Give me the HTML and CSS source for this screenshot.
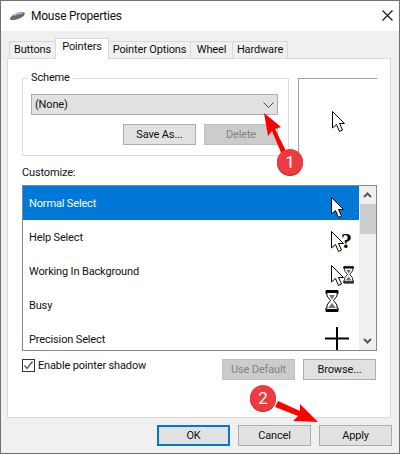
FILE: index.html
```html
<!DOCTYPE html>
<html lang="en">
<head>
  <meta charset="UTF-8">
  <title>Mouse Properties</title>
  <link rel="stylesheet" href="styles.css">
</head>
<body>
  <svg width="0" height="0" class="defs">
    <defs>
      <path id="arrow" d="M0.5 0.5V17L4.5 13.5L7.5 20.5L10.5 19L7.5 12.5H12.5Z" stroke-width="1" stroke-linejoin="miter"/>
      <g id="glass">
        <path d="M1 0.5H13V3.5H12V6L8.5 10.5L12 15V18H13V21.5H1V18H2V15L5.5 10.5L2 6V3.5H1Z" fill="#fff" stroke="#000"/>
        <path d="M1 1H13V3H1ZM1 19H13V21H1Z" fill="#000"/>
        <path d="M4 5H10L7 9.5ZM7 13L11 18H3Z" fill="#777"/>
      </g>
    </defs>
  </svg>

  <div class="window">
    <div class="titlebar">
      <svg class="app-icon" width="15" height="8" viewBox="0 0 15 8">
        <path d="M0 6C2 3 8 0 12 0C15 0 15.500 2 14 3.500C12 6 6 8 2 8C0 8 -0.500 7 0 6Z" fill="#5f6b75"/>
        <path d="M4 3.500C6 2 9 1 12.500 1.300" stroke="#b4bdc4" stroke-width="1.500" fill="none"/>
      </svg>
      <span class="title">Mouse Properties</span>
      <svg class="close" width="11" height="11" viewBox="0 0 11 11">
        <path d="M0.5 0.5L10.5 10.5M10.5 0.5L0.5 10.5" stroke="#111" stroke-width="1.1"/>
      </svg>
    </div>

    <div class="body">
      <div class="tabs">
        <div class="tab tab-buttons">Buttons</div>
        <div class="tab tab-pointers active">Pointers</div>
        <div class="tab tab-options">Pointer Options</div>
        <div class="tab tab-wheel">Wheel</div>
        <div class="tab tab-hardware">Hardware</div>
      </div>

      <div class="panel">
        <div class="top-row">
          <fieldset class="scheme">
            <legend>Scheme</legend>
            <div class="select">
              <span>(None)</span>
              <svg width="11" height="6" viewBox="0 0 11 6"><path d="M0.5 0.5L5.5 5.500L10.500 0.5" stroke="#444" fill="none"/></svg>
            </div>
            <div class="scheme-buttons">
              <button class="btn">Save As...</button>
              <button class="btn btn-wide disabled">Delete</button>
            </div>
          </fieldset>
          <div class="preview">
            <svg width="16" height="22" viewBox="0 0 16 22"><use href="#arrow" fill="#fff" stroke="#000"/></svg>
          </div>
        </div>

        <div class="label">Customize:</div>
        <div class="list">
          <div class="rows">
            <div class="row selected">
              <span>Normal Select</span>
              <svg class="cursor" width="34" height="34" viewBox="0 0 34 34"><use href="#arrow" x="8" y="11" fill="#fff" stroke="#000"/></svg>
            </div>
            <div class="row">
              <span>Help Select</span>
              <svg class="cursor" width="34" height="34" viewBox="0 0 34 34">
                <use href="#arrow" x="8" y="11" fill="#fff" stroke="#000"/>
                <text x="18" y="28" class="help-mark">?</text>
              </svg>
            </div>
            <div class="row">
              <span>Working In Background</span>
              <svg class="cursor" width="34" height="34" viewBox="0 0 34 34">
                <use href="#arrow" x="8" y="11" fill="#fff" stroke="#000"/>
                <use href="#glass" transform="translate(20 12) scale(0.8)"/>
              </svg>
            </div>
            <div class="row">
              <span>Busy</span>
              <svg class="cursor" width="34" height="34" viewBox="0 0 34 34"><use href="#glass" x="2" y="2"/></svg>
            </div>
            <div class="row">
              <span>Precision Select</span>
              <svg class="cursor" width="34" height="34" viewBox="0 0 34 34"><path d="M2 16.500H26M14 5V28" stroke="#000" stroke-width="2"/></svg>
            </div>
          </div>
          <div class="scrollbar">
            <svg width="9" height="6" viewBox="0 0 9 6"><path d="M1 5L4.500 1.500L8 5" stroke="#555" stroke-width="2" fill="none"/></svg>
            <div class="track"><div class="thumb"></div></div>
            <svg width="9" height="6" viewBox="0 0 9 6"><path d="M1 1L4.500 4.500L8 1" stroke="#555" stroke-width="2" fill="none"/></svg>
          </div>
        </div>

        <div class="bottom-row">
          <div class="checkbox">
            <svg width="13" height="13" viewBox="0 0 13 13">
              <rect x="0.5" y="0.5" width="12" height="12" fill="#fff" stroke="#333"/>
              <path d="M2.500 6.500L5 9.500L10.500 2.500" stroke="#555" stroke-width="1.300" fill="none"/>
            </svg>
            <span>Enable pointer shadow</span>
          </div>
          <div class="list-buttons">
            <button class="btn disabled">Use Default</button>
            <button class="btn">Browse...</button>
          </div>
        </div>
      </div>

      <div class="footer">
        <button class="btn default">OK</button>
        <button class="btn">Cancel</button>
        <button class="btn">Apply</button>
      </div>
    </div>
  </div>

  <!-- red callouts drawn on top of the dialog -->
  <svg class="callouts" width="400" height="455" viewBox="0 0 400 455">
    <path d="M264 113L281 127L275 129L287 153L282 155L272 131L268 136Z" fill="#f00"/>
    <path d="M318 422L300 404L300 411L278 401L275 407L298 416L293 421Z" fill="#f00"/>
    <circle cx="290" cy="163" r="13" fill="#b9282c"/>
    <circle cx="290" cy="162" r="13" fill="#ef3b3f"/>
    <text x="290" y="168" class="callout-num">1</text>
    <circle cx="263" cy="399" r="13" fill="#b9282c"/>
    <circle cx="263" cy="398" r="13" fill="#ef3b3f"/>
    <text x="263" y="404" class="callout-num">2</text>
  </svg>
</body>
</html>
```

FILE: styles.css
```css
* { box-sizing: border-box; }
html, body { margin: 0; padding: 0; }
body { width: 400px; height: 455px; position: relative; overflow: hidden; background: #fff; font-family: Roboto, sans-serif; font-size: 11px; letter-spacing: -0.15px; color: #111; }
.defs { position: absolute; }

.window {
  width: 400px;
  height: 454px;
  border: 1px solid #707070;
  display: flex;
  flex-direction: column;
}
.titlebar {
  height: 30px;
  flex: none;
  background: #fff;
  display: flex;
  align-items: center;
  padding-left: 9px;
}
.app-icon { margin-right: 6px; }
.title { font-size: 12px; letter-spacing: -0.25px; flex: 1; }
.close { margin-right: 6px; margin-top: -1px; }

.body {
  flex: 1;
  background: #f0f0f0;
  padding: 7px 7px 0 6px;
}
.tabs { display: flex; height: 20px; padding-left: 2px; align-items: flex-end; }
.tab {
  height: 17px;
  text-align: center;
  line-height: 15px;
  border: 1px solid #d9d9d9;
  border-bottom: none;
  margin-right: -1px;
  background: #f0f0f0;
}
.tab-buttons { width: 47px; }
.tab-pointers { width: 54px; }
.tab-options { width: 83px; }
.tab-wheel { width: 43px; }
.tab-hardware { width: 56px; }
.tab.active {
  height: 21px;
  line-height: 16px;
  background: #fff;
  position: relative;
  z-index: 1;
  margin-bottom: -1px;
}

.panel {
  width: 384px;
  height: 360px;
  background: #fff;
  border: 1px solid #d9d9d9;
  padding: 11px 12px 0 14px;
}
.top-row { display: flex; align-items: flex-start; }
.scheme {
  width: 267px;
  height: 86px;
  margin: 0;
  padding: 0 10px 0 8px;
  border: 1px solid #dcdcdc;
}
.scheme legend { padding: 0 3px; margin-left: -3px; line-height: 16px; }
.select {
  height: 21px;
  margin-top: 8px;
  background: #e1e1e1;
  border: 1px solid #adadad;
  display: flex;
  align-items: center;
  justify-content: space-between;
  padding: 0 3px 0 3px;
}
.scheme-buttons { display: flex; justify-content: flex-end; gap: 8px; margin-top: 9px; }

.btn {
  width: 73px;
  height: 21px;
  padding: 0;
  background: #e1e1e1;
  border: 1px solid #adadad;
  font: inherit;
  letter-spacing: inherit;
  color: #111;
}
.btn-wide { width: 74px; }
.btn.disabled { background: #ccc; border-color: #bfbfbf; color: #838383; }
.btn.default { border: 2px solid #0078d7; }

.preview {
  width: 79px;
  height: 78px;
  margin: 8px 0 0 9px;
  border-top: 1px solid #a0a0a0;
  border-left: 1px solid #a0a0a0;
  padding: 32px 0 0 33px;
}
.preview svg { display: block; }

.label { margin-top: 9px; line-height: 15px; }
.list {
  height: 166px;
  margin-top: 5px;
  width: 355px;
  border: 1px solid #828790;
  display: flex;
  overflow: hidden;
}
.rows { flex: 1; }
.row {
  height: 34px;
  display: flex;
  align-items: center;
  justify-content: space-between;
  padding: 0 2px 0 6px;
}
.row span { padding-top: 1px; }
.row.selected { background: #0078d7; color: #fff; }
.cursor { flex: none; }
.help-mark { font-family: "Liberation Serif", serif; font-weight: bold; font-size: 22px; fill: #000; }

.scrollbar {
  width: 17px;
  flex: none;
  background: #f0f0f0;
  display: flex;
  flex-direction: column;
  align-items: center;
  padding: 6px 0;
}
.track { flex: 1; width: 100%; padding-top: 6px; }
.thumb { height: 30px; background: #cdcdcd; margin-left: 1px; }
.scrollbar svg { flex: none; }

.bottom-row { display: flex; justify-content: space-between; margin-top: 8px; width: 354px; }
.checkbox { display: flex; align-items: flex-start; gap: 3px; line-height: 14px; }
.list-buttons { display: flex; gap: 8px; }

.footer { display: flex; justify-content: flex-end; gap: 8px; margin-top: 7px; }

.callouts { position: absolute; left: 0; top: 0; pointer-events: none; }
.callout-num { font-family: Roboto, sans-serif; font-size: 17px; fill: #fff; text-anchor: middle; }
```
